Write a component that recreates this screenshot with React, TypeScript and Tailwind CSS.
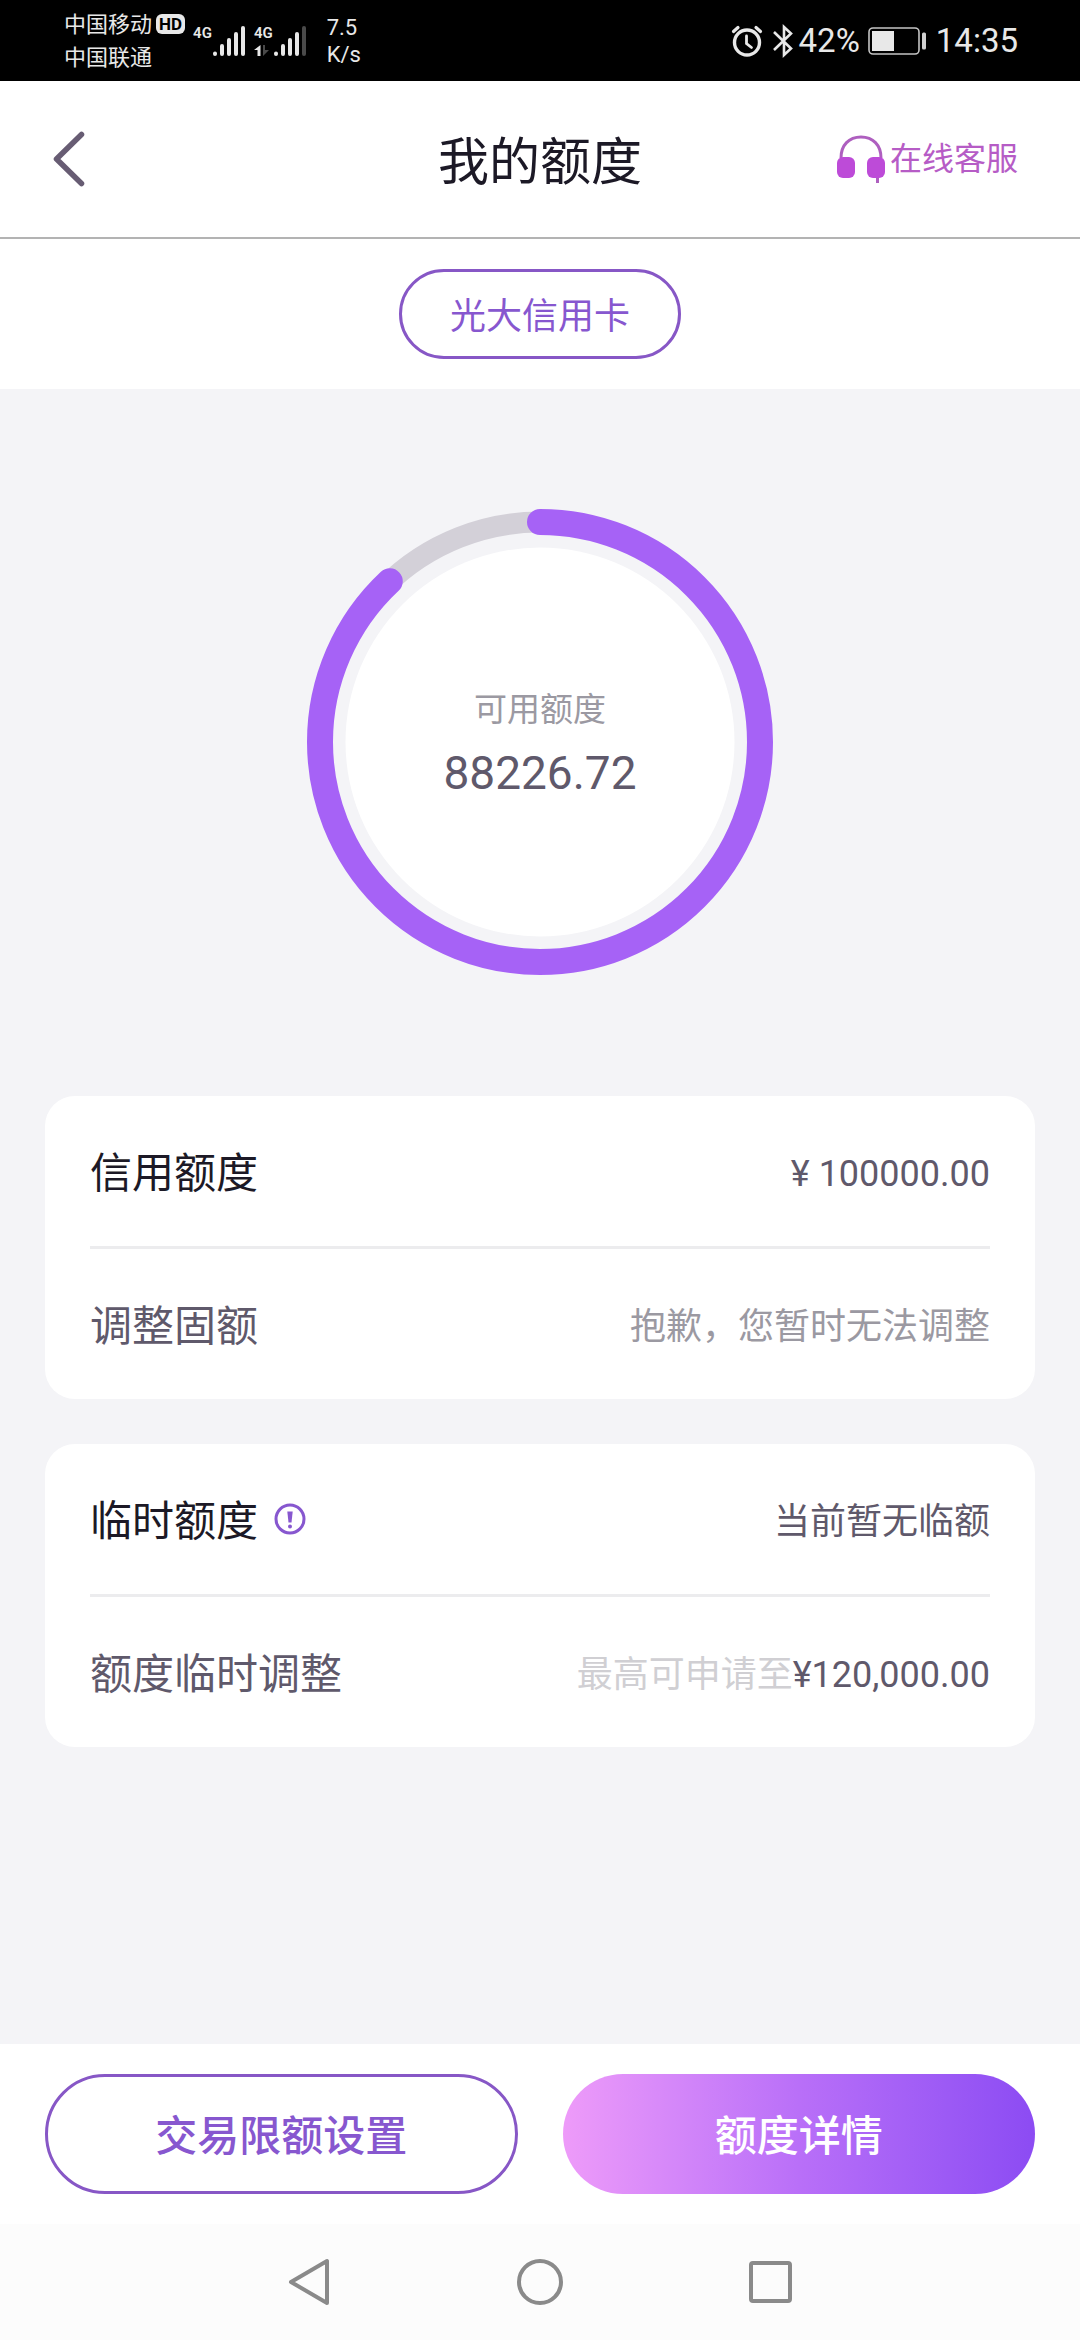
import type { ReactNode } from 'react';

const RADIUS = 220;
const CIRCUMFERENCE = 2 * Math.PI * RADIUS;

function SignalBars({ weak = false }: { weak?: boolean }) {
  return (
    <svg width="34" height="32" viewBox="0 0 34 32" fill="none" strokeLinecap="round" strokeWidth="4" aria-hidden="true">
      <path d="M3 28.500v.5M10 21v8M17 15v14M24 9v20" stroke="#e8e8e8" />
      <path d="M31 3v26" stroke={weak ? '#4a4a4a' : '#e8e8e8'} />
    </svg>
  );
}

function StatusBar() {
  return (
    <div className="flex h-[81px] items-center bg-black pr-[62px] pl-16 text-[#e8e8e8]">
      <div className="flex flex-col text-[22px] leading-[33px]">
        <div className="flex items-center gap-1">
          <span>中国移动</span>
          <span className="rounded-md bg-[#e8e8e8] px-[3px] text-[17px] leading-5 font-bold text-black">HD</span>
        </div>
        <span>中国联通</span>
      </div>
      <div className="ml-2 flex items-start">
        <span className="text-[15px] leading-4 font-semibold">4G</span>
        <SignalBars />
      </div>
      <div className="ml-2 flex items-start">
        <div className="flex flex-col">
          <span className="text-[15px] leading-4 font-semibold">4G</span>
          <svg width="18" height="16" viewBox="0 0 18 16" aria-hidden="true">
            <path d="M6.500 4v11h-3V9H0z" fill="#e8e8e8" />
            <path d="M9 4v11l6-6h-4V4z" fill="#4a4a4a" />
          </svg>
        </div>
        <SignalBars weak />
      </div>
      <div className="ml-5 flex flex-col text-[22px] leading-[27px]">
        <span>7.5</span>
        <span>K/s</span>
      </div>
      <div className="ml-auto flex items-center text-[33px] leading-10">
        <svg width="32" height="32" viewBox="0 0 32 32" fill="none" stroke="#e8e8e8" strokeLinecap="round" aria-hidden="true">
          <circle cx="16" cy="17.500" r="12.500" strokeWidth="3.400" />
          <path d="M15.500 11v7.500l5 4" strokeWidth="2.800" />
          <path d="M2.500 6.500 7 2.500M29.500 6.500 25 2.500" strokeWidth="3.200" />
        </svg>
        <svg className="ml-2" width="24" height="34" viewBox="0 0 24 34" fill="none" stroke="#e8e8e8" strokeWidth="2.600" aria-hidden="true">
          <path d="M3 8 20 24.500 13 31V3l7 6.500L3 26" />
        </svg>
        <span className="ml-1">42%</span>
        <svg className="ml-2" width="60" height="28" viewBox="0 0 60 28" aria-hidden="true">
          <rect x="1" y="1" width="50" height="26" rx="4" fill="none" stroke="#c4c4c4" strokeWidth="1.600" />
          <rect x="4" y="4" width="22" height="20" fill="#e8e8e8" />
          <rect x="54" y="5.500" width="4" height="17" rx="1.500" fill="#d0d0d0" />
        </svg>
        <span className="ml-2">14:35</span>
      </div>
    </div>
  );
}

function Header() {
  return (
    <header className="grid h-[158px] grid-cols-3 items-center border-b-2 border-[#b3b3b3] px-[50px]">
      <button type="button" aria-label="返回" className="justify-self-start">
        <svg width="38" height="58" viewBox="0 0 38 58" fill="none" stroke="#675c73" strokeWidth="5.500" strokeLinecap="round" strokeLinejoin="round">
          <path d="M31.500 4.500 6.500 29l25 24.500" />
        </svg>
      </button>
      <h1 className="justify-self-center pt-2 text-[51px] leading-[60px] whitespace-nowrap text-[#1c1926]">我的额度</h1>
      <a href="#service" className="flex items-center gap-1 justify-self-end pr-3 text-[32px] leading-10 whitespace-nowrap text-[#b65cc6]">
        <svg width="50" height="50" viewBox="0 0 50 50" aria-hidden="true">
          <path d="M5 24C5 11 13 3 25 3s20 8 20 21M41.500 40v9" fill="none" stroke="#ae5fbf" strokeWidth="3" />
          <rect x="1" y="23" width="18" height="21" rx="6" fill="#bd4bd8" />
          <rect x="31" y="23" width="18" height="21" rx="6" fill="#bd4bd8" />
        </svg>
        在线客服
      </a>
    </header>
  );
}

function LimitRing({ available, total }: { available: number; total: number }) {
  // the arc only moves in whole percents
  const percent = Math.floor((available / total) * 100);
  const filled = (CIRCUMFERENCE * percent) / 100;

  return (
    <div className="grid place-items-center pt-[120px] pb-[121px]">
      <svg className="col-start-1 row-start-1" width="466" height="466" viewBox="0 0 466 466" fill="none" aria-hidden="true">
        <circle cx="233" cy="233" r={RADIUS} stroke="#d3d0d8" strokeWidth="21" />
        <circle cx="233" cy="233" r="194.500" fill="#fff" />
        <circle
          cx="233"
          cy="233"
          r={RADIUS}
          stroke="#a662f6"
          strokeWidth="26"
          strokeLinecap="round"
          strokeDasharray={`${filled} ${CIRCUMFERENCE}`}
          transform="rotate(-90 233 233)"
        />
      </svg>
      <div className="col-start-1 row-start-1 flex flex-col items-center gap-2 pt-1">
        <span className="text-[33px] leading-[50px] text-[#9b99a2]">可用额度</span>
        <span className="text-[46px] leading-[60px] text-[#5f596b]">{available.toFixed(2)}</span>
      </div>
    </div>
  );
}

function Card({ children }: { children: ReactNode }) {
  return <section className="divide-y-3 divide-[#ececee] rounded-[30px] bg-white px-[45px]">{children}</section>;
}

function Row({ label, children }: { label: ReactNode; children: ReactNode }) {
  return (
    <div className="box-content h-[150px] text-4xl leading-[50px] text-[#5f596b]">
      <div className="flex h-full items-center justify-between pt-1.5">
        <div className="flex items-center gap-4 text-[42px]">{label}</div>
        <div>{children}</div>
      </div>
    </div>
  );
}

function InfoIcon() {
  return (
    <svg width="32" height="32" viewBox="0 0 32 32" aria-hidden="true">
      <circle cx="16" cy="16" r="14" fill="none" stroke="#8757cf" strokeWidth="3" />
      <path d="M13.300 8.500h5.400l-1.200 11h-3z" fill="#8757cf" />
      <circle cx="16" cy="23.500" r="2" fill="#8757cf" />
    </svg>
  );
}

function SystemNav() {
  return (
    <nav className="flex h-[116px] items-center justify-center gap-[185px] bg-[#fcfcfc]">
      <button type="button" aria-label="返回">
        <svg width="46" height="50" viewBox="0 0 46 50" fill="none" stroke="#8a8a8a" strokeWidth="4" strokeLinejoin="round">
          <path d="M41 4v42L5 25z" />
        </svg>
      </button>
      <button type="button" aria-label="主屏幕">
        <svg width="46" height="46" viewBox="0 0 46 46" fill="none" stroke="#8a8a8a" strokeWidth="4">
          <circle cx="23" cy="23" r="21" />
        </svg>
      </button>
      <button type="button" aria-label="最近任务">
        <svg width="46" height="46" viewBox="0 0 46 46" fill="none" stroke="#8a8a8a" strokeWidth="4">
          <rect x="3" y="4" width="39" height="38" rx="2" />
        </svg>
      </button>
    </nav>
  );
}

export default function App() {
  return (
    <div lang="zh-CN" className="flex min-h-screen flex-col bg-white font-[Roboto,'Noto_Sans_CJK_SC',sans-serif]">
      <StatusBar />
      <Header />

      <div className="flex justify-center py-[30px]">
        <button type="button" className="h-[90px] rounded-full border-3 border-[#8757c6] px-12 pt-1.5 text-4xl leading-[50px] text-[#8757cf]">
          光大信用卡
        </button>
      </div>

      <main className="flex-1 bg-[#f4f4f7] px-[45px]">
        <LimitRing available={88226.72} total={100000} />
        <div className="flex flex-col gap-[45px]">
          <Card>
            <Row label={<span className="text-[#1c1926]">信用额度</span>}>¥ 100000.00</Row>
            <Row label="调整固额">
              <span className="text-[#9b99a2]">抱歉，您暂时无法调整</span>
            </Row>
          </Card>
          <Card>
            <Row
              label={
                <>
                  <span className="text-[#1c1926]">临时额度</span>
                  <button type="button" aria-label="临时额度说明" className="pb-1.5">
                    <InfoIcon />
                  </button>
                </>
              }
            >
              当前暂无临额
            </Row>
            <Row label="额度临时调整">
              <span className="text-[#d0cfd3]">最高可申请至</span>¥120,000.00
            </Row>
          </Card>
        </div>
      </main>

      <footer className="grid grid-cols-2 gap-[45px] px-[45px] py-[30px] text-[42px] leading-[60px] font-medium">
        <button type="button" className="h-[120px] rounded-full border-3 border-[#8757c6] pt-1.5 text-[#8757cf]">
          交易限额设置
        </button>
        <button type="button" className="h-[120px] rounded-full bg-linear-to-r from-[#ee9bf9] via-[#b96ff8] to-[#8c4bf3] pt-1.5 text-white">
          额度详情
        </button>
      </footer>
      <SystemNav />
    </div>
  );
}
